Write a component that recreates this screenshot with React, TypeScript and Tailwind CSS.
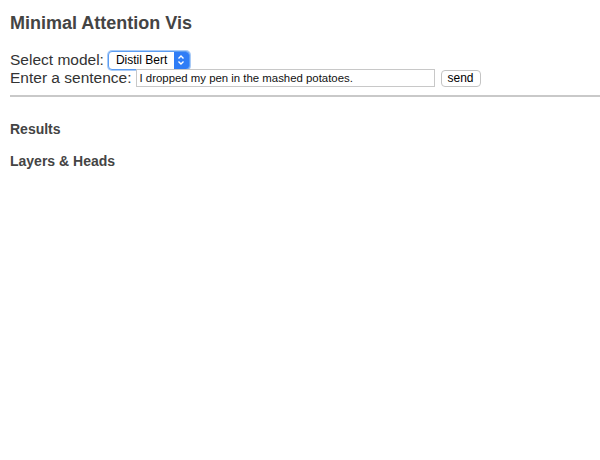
import React from "react";

export default function App() {
  return (
    <div className="w-[600px] h-[460px] bg-white text-[#333] pl-[10px] pt-[12px]" style={{ fontFamily: '"Liberation Sans", Arial, sans-serif' }}>
      <h1 className="text-[18px] font-bold leading-[22px] text-[#444]">Minimal Attention Vis</h1>
      <div className="mt-[17px] flex items-center h-[18px] text-[15.5px] leading-[18px]">
        <span>Select model:</span>
        <div className="ml-[4px] flex items-center h-[19px] w-[82px] rounded-[4px] border border-[#5b9cf2] bg-white overflow-hidden shadow-[0_0_0_1px_#a9cbf7]">
          <span className="flex-1 pl-[7px] text-[12px] text-black">Distil Bert</span>
          <span className="w-[15px] h-full bg-[#2f7df6] flex items-center justify-center">
            <svg width="8" height="12" viewBox="0 0 8 12" fill="none" stroke="white" strokeWidth="1.4">
              <path d="M1.5 4.5 L4 2 L6.5 4.5" />
              <path d="M1.5 7.5 L4 10 L6.5 7.5" />
            </svg>
          </span>
        </div>
      </div>
      <div className="flex items-center h-[18px] text-[15.5px] leading-[18px]">
        <span>Enter a sentence:</span>
        <div className="ml-[4px] w-[299px] h-[18px] border border-[#c8c8c8] bg-white flex items-center pl-[3px] text-[11.4px] text-[#111]">
          I dropped my pen in the mashed potatoes.
        </div>
        <button className="ml-[6px] h-[17px] w-[40px] rounded-[4px] border border-[#c4c4c4] bg-white text-[12px] leading-[15px] text-black">send</button>
      </div>
      <div className="mt-[8px] h-[2px] bg-[#c9c9c9]" />
      <h2 className="mt-[24px] text-[14px] font-bold leading-[16px] text-[#444]">Results</h2>
      <h2 className="mt-[16px] text-[14px] font-bold leading-[16px] text-[#444]">Layers &amp; Heads</h2>
    </div>
  );
}
